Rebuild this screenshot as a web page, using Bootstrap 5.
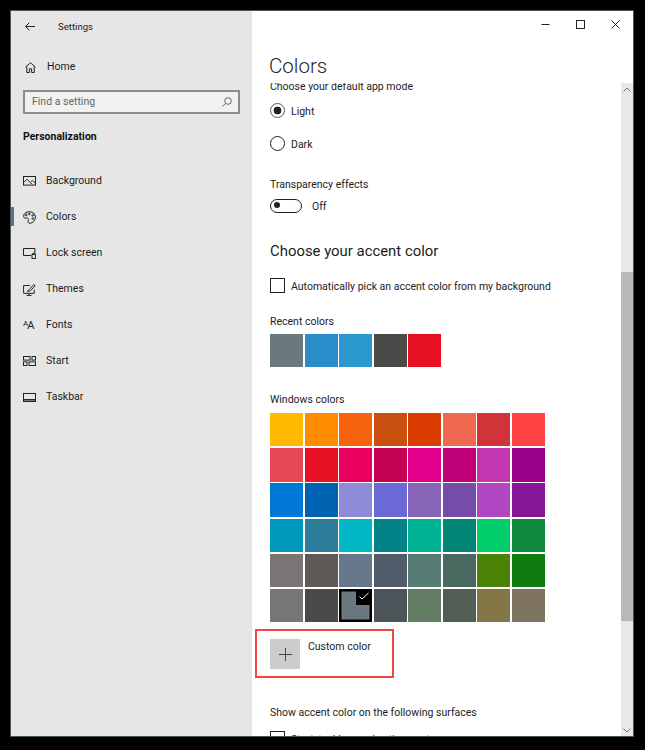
<!DOCTYPE html>
<html lang="en">
<head>
<meta charset="utf-8">
<title>Settings</title>
<link href="https://cdn.jsdelivr.net/npm/bootstrap@5.3.0/dist/css/bootstrap.min.css" rel="stylesheet">
<style>
html,body{height:100%;margin:0;background:#000;overflow:hidden}
body{font-family:Roboto,"Noto Sans","Liberation Sans",sans-serif;font-size:10.5px;color:#1c1c1c;line-height:16px}
.win{position:absolute;left:10px;top:10px;width:624px;height:727px;border:1px solid #46585e;display:flex;background:#fff;overflow:hidden}
.side{width:241px;flex:none;background:#e6e6e6;position:relative}
.side svg,.wbtn svg,.sb svg{display:block;fill:none;stroke:#222;stroke-width:1}
.top{height:26px;padding:5px 0 0 14px}
.top .ttl{margin-left:23px;font-size:9.6px}
.home{margin-top:22px;height:16px;padding-left:14px}
.home span{margin-left:11px}
.search{margin:15px 12px 0 12px;height:24px;border:2px solid #8c8c8c;background:#f1f1f1;padding:0 6px 0 7px;color:#666}
.search svg{stroke:#666}
.sect{margin:15px 0 0 12px;font-weight:700;font-size:10.5px;color:#111}
.nav-list{margin-top:18px}
.nav-row{height:36px;padding-left:12px;position:relative}
.nav-row span{margin-left:10px}
.nav-row.on::before{content:"";position:absolute;left:0;top:8px;width:3px;height:19px;background:#62737a}
.glyph-a{margin:0!important;font-size:11px;width:13px;letter-spacing:-1px;line-height:12px}
.glyph-a small{font-size:8px;vertical-align:3px}
.main{flex:1;min-width:0;display:flex;flex-direction:column}
.head{height:72px;flex:none;position:relative}
.wbtns{position:absolute;right:0;top:0;height:26px}
.wbtn{width:35px;height:26px}
h1.t{margin:0;padding:40px 0 0 17px;font-size:20.5px;font-weight:300;line-height:30px;color:#222;font-family:Roboto,sans-serif}
.scroller{flex:1;min-height:0;display:flex;overflow:hidden}
.pane{flex:1;min-width:0;padding-left:18px;overflow:hidden}
.sb{width:12px;flex:none;background:#e8e8e8;position:relative}
.sb .thumb{position:absolute;left:0;right:0;top:189px;height:349px;background:#b9b9b9}
.sb .up{position:absolute;left:2px;top:3px;stroke:#777}
.sb .dn{position:absolute;left:2px;bottom:2px;stroke:#777}
.r{height:15px}
.r span:not(.tog){margin-left:6px;padding-top:2px}
.clip-top{margin-top:-4px}
.mt4{margin-top:4px}.mt5{margin-top:5px}.mt8{margin-top:8px}.mt10{margin-top:10px}.mt16{margin-top:16px}.mt18{margin-top:18px}.mt21{margin-top:21px}.mt25{margin-top:25px}.mt26{margin-top:26px}.mt27{margin-top:27px}
input.rd{appearance:none;width:15px;height:15px;margin:0;border:1.6px solid #222;border-radius:50%;background:#fff;flex:none}
input.rd:checked{border-color:#4b5b61;background:radial-gradient(circle,#222 0 3.6px,#fff 4.2px)}
input.cb{appearance:none;width:15px;height:15px;margin:0;border:1.6px solid #222;background:#fff;flex:none}
.tog{width:32px;height:14px;border:1.6px solid #222;border-radius:8px;flex:none;position:relative;display:block}
.tog::after{content:"";position:absolute;left:3px;top:2.4px;width:6.4px;height:6.4px;border-radius:50%;background:#222}
.r span.off{margin-left:10px}
h2.s{margin-bottom:0;font-size:14.9px;font-weight:400;line-height:22px;color:#1c1c1c;font-family:Roboto,sans-serif}
.grid-c{display:grid;grid-template-columns:repeat(8,33px);column-gap:1.55px;row-gap:1.95px;grid-auto-rows:33.2px}
.sw{display:block;position:relative}
.sw.sel{box-shadow:inset 0 0 0 2.5px #000}
.sw.sel::after{content:"";position:absolute;right:0;top:0;width:16px;height:16px;background:#000}
.sw.sel svg{position:absolute;right:3px;top:2px;z-index:1}
.custom{margin:7px 0 0 -15px;width:139px;height:49px;border:2px solid #f44444;padding:8px 0 0 13px}
.plus{width:30px;height:30px;background:#ccc}
.custom .lbl{margin-left:8px}
</style>
</head>
<body>
<div class="win">
  <aside class="side">
    <div class="top d-flex align-items-center">
      <svg width="10" height="9" viewBox="0 0 10 9"><path d="M10 4.500H.8M4.400.6.600 4.500l3.800 3.900"/></svg>
      <span class="ttl">Settings</span>
    </div>
    <div class="home d-flex align-items-center">
      <svg width="11" height="11" viewBox="0 0 11 11"><path d="M.5 5.200 5.500.7l5 4.500M1.800 4.300v6.200h2.600V6.800h2.200v3.700h2.600V4.300"/></svg>
      <span>Home</span>
    </div>
    <div class="search d-flex align-items-center justify-content-between">
      <span>Find a setting</span>
      <svg width="10" height="10" viewBox="0 0 10 10"><circle cx="6" cy="4" r="3.300"/><path d="M3.600 6.400.6 9.400"/></svg>
    </div>
    <div class="sect">Personalization</div>
    <div class="nav-list">
      <div class="nav-row d-flex align-items-center">
        <svg width="13" height="10" viewBox="0 0 13 10"><rect x=".5" y=".5" width="12" height="8.600"/><path d="M.7 6.500 4 3.200l5 5M8 5.600l1.600-1.200 2.800 2.800"/></svg>
        <span>Background</span>
      </div>
      <div class="nav-row on d-flex align-items-center">
        <svg width="13" height="13" viewBox="0 0 13 13"><path d="M6.500.7C3 .7.600 2.800.600 5.400c0 1.900 1.900 1.700 3.200 1.700 1.600 0 2 1 1.400 2.300-.6 1.400.1 3 1.700 2.900 3-.2 5.500-3 5.500-6.100C12.400 3 9.800.7 6.500.7Z"/><circle cx="3.300" cy="4" r=".8"/><circle cx="6.400" cy="2.900" r=".8"/><circle cx="9.700" cy="4.300" r=".8"/><circle cx="9.800" cy="7.600" r=".8"/></svg>
        <span>Colors</span>
      </div>
      <div class="nav-row d-flex align-items-center">
        <svg width="13" height="11" viewBox="0 0 13 11"><path d="M8 7.500H.5v-7h11.400V5"/><rect x="9" y="6.400" width="3.600" height="4.100"/><path d="M9.800 6.400V5.200h2v1.200"/></svg>
        <span>Lock screen</span>
      </div>
      <div class="nav-row d-flex align-items-center">
        <svg width="13" height="13" viewBox="0 0 13 13"><path d="M7 2.500H.6v7.800h10.600V6.500M3.600 12.400h5M6 10.300v2"/><path d="M4.200 8.200c1.400-.1 1.500-1.400 2.300-2L10.800 1.500l1.400 1.200-4.400 4.600c-.8.8-2.200 1.100-3.600.9Z"/></svg>
        <span>Themes</span>
      </div>
      <div class="nav-row d-flex align-items-center">
        <span class="glyph-a"><small>A</small>A</span>
        <span>Fonts</span>
      </div>
      <div class="nav-row d-flex align-items-center">
        <svg width="13" height="10" viewBox="0 0 13 10"><rect x=".5" y=".5" width="6.500" height="3.600"/><rect x="9" y=".5" width="3.500" height="3.600"/><rect x=".5" y="5.900" width="3.500" height="3.600"/><rect x="6" y="5.900" width="6.500" height="3.600"/></svg>
        <span>Start</span>
      </div>
      <div class="nav-row d-flex align-items-center">
        <svg width="13" height="9" viewBox="0 0 13 9"><rect x=".5" y=".5" width="12" height="8"/><path d="M.5 6.800h12" stroke-width="1.500"/></svg>
        <span>Taskbar</span>
      </div>
    </div>
  </aside>
  <main class="main">
    <div class="head">
      <div class="wbtns d-flex">
        <div class="wbtn d-flex align-items-center justify-content-center"><svg width="9" height="9" viewBox="0 0 9 9"><path d="M.5 4.500h8"/></svg></div>
        <div class="wbtn d-flex align-items-center justify-content-center"><svg width="9" height="9" viewBox="0 0 9 9"><rect x=".5" y=".5" width="8" height="8"/></svg></div>
        <div class="wbtn d-flex align-items-center justify-content-center"><svg width="9" height="9" viewBox="0 0 9 9"><path d="M.5.500l8 8M8.500.500l-8 8"/></svg></div>
      </div>
      <h1 class="t">Colors</h1>
    </div>
    <div class="scroller">
      <div class="pane">
        <div class="clip-top">Choose your default app mode</div>
        <label class="r d-flex align-items-center mt8"><input class="rd" type="radio" name="m" checked><span>Light</span></label>
        <label class="r d-flex align-items-center mt18"><input class="rd" type="radio" name="m"><span>Dark</span></label>
        <div class="mt26">Transparency effects</div>
        <div class="r d-flex align-items-center mt5"><span class="tog"></span><span class="off">Off</span></div>
        <h2 class="s mt27">Choose your accent color</h2>
        <label class="r d-flex align-items-center mt16"><input class="cb" type="checkbox"><span>Automatically pick an accent color from my background</span></label>
        <div class="mt21">Recent colors</div>
        <div class="grid-c mt4">
          <i class="sw" style="background:#69797e"></i><i class="sw" style="background:#2a8dc9"></i><i class="sw" style="background:#2a98cc"></i><i class="sw" style="background:#4c4a48"></i><i class="sw" style="background:#e81123"></i>
        </div>
        <div class="mt25">Windows colors</div>
        <div class="grid-c mt5">
          <i class="sw" style="background:#ffb900"></i><i class="sw" style="background:#ff8c00"></i><i class="sw" style="background:#f7630c"></i><i class="sw" style="background:#ca5010"></i><i class="sw" style="background:#da3b01"></i><i class="sw" style="background:#ef6950"></i><i class="sw" style="background:#d13438"></i><i class="sw" style="background:#ff4343"></i>
          <i class="sw" style="background:#e74856"></i><i class="sw" style="background:#e81123"></i><i class="sw" style="background:#ea005e"></i><i class="sw" style="background:#c30052"></i><i class="sw" style="background:#e3008c"></i><i class="sw" style="background:#bf0077"></i><i class="sw" style="background:#c239b3"></i><i class="sw" style="background:#9a0089"></i>
          <i class="sw" style="background:#0078d7"></i><i class="sw" style="background:#0063b1"></i><i class="sw" style="background:#8e8cd8"></i><i class="sw" style="background:#6b69d6"></i><i class="sw" style="background:#8764b8"></i><i class="sw" style="background:#744da9"></i><i class="sw" style="background:#b146c2"></i><i class="sw" style="background:#881798"></i>
          <i class="sw" style="background:#0099bc"></i><i class="sw" style="background:#2d7d9a"></i><i class="sw" style="background:#00b7c3"></i><i class="sw" style="background:#038387"></i><i class="sw" style="background:#00b294"></i><i class="sw" style="background:#018574"></i><i class="sw" style="background:#00cc6a"></i><i class="sw" style="background:#10893e"></i>
          <i class="sw" style="background:#7a7574"></i><i class="sw" style="background:#5d5a58"></i><i class="sw" style="background:#68768a"></i><i class="sw" style="background:#515c6b"></i><i class="sw" style="background:#567c73"></i><i class="sw" style="background:#486860"></i><i class="sw" style="background:#498205"></i><i class="sw" style="background:#107c10"></i>
          <i class="sw" style="background:#767676"></i><i class="sw" style="background:#4c4a48"></i><i class="sw sel" style="background:#69797e"><svg width="10" height="10" viewBox="0 0 10 10" fill="none" stroke="#fff" stroke-width="1"><path d="M.5 5.500l2.500 2.500L9.500 2"/></svg></i><i class="sw" style="background:#4a5459"></i><i class="sw" style="background:#647c64"></i><i class="sw" style="background:#525e54"></i><i class="sw" style="background:#847545"></i><i class="sw" style="background:#7e735f"></i>
        </div>
        <div class="custom d-flex align-items-start">
          <div class="plus d-flex align-items-center justify-content-center"><svg width="13" height="13" viewBox="0 0 13 13" fill="none" stroke="#444" stroke-width="1"><path d="M6.500 0v13M0 6.500h13"/></svg></div>
          <span class="lbl">Custom color</span>
        </div>
        <div class="mt27">Show accent color on the following surfaces</div>
        <label class="r d-flex align-items-center mt10"><input class="cb" type="checkbox"><span>Start, taskbar, and action center</span></label>
      </div>
      <div class="sb">
        <svg class="up" width="8" height="8" viewBox="0 0 8 8"><path d="M.5 5.500l3.500-3.500 3.500 3.500"/></svg>
        <div class="thumb"></div>
        <svg class="dn" width="8" height="8" viewBox="0 0 8 8"><path d="M.5 2.500l3.500 3.500 3.500-3.500"/></svg>
      </div>
    </div>
  </main>
</div>
<script src="https://cdn.jsdelivr.net/npm/bootstrap@5.3.0/dist/js/bootstrap.bundle.min.js"></script>
</body>
</html>
